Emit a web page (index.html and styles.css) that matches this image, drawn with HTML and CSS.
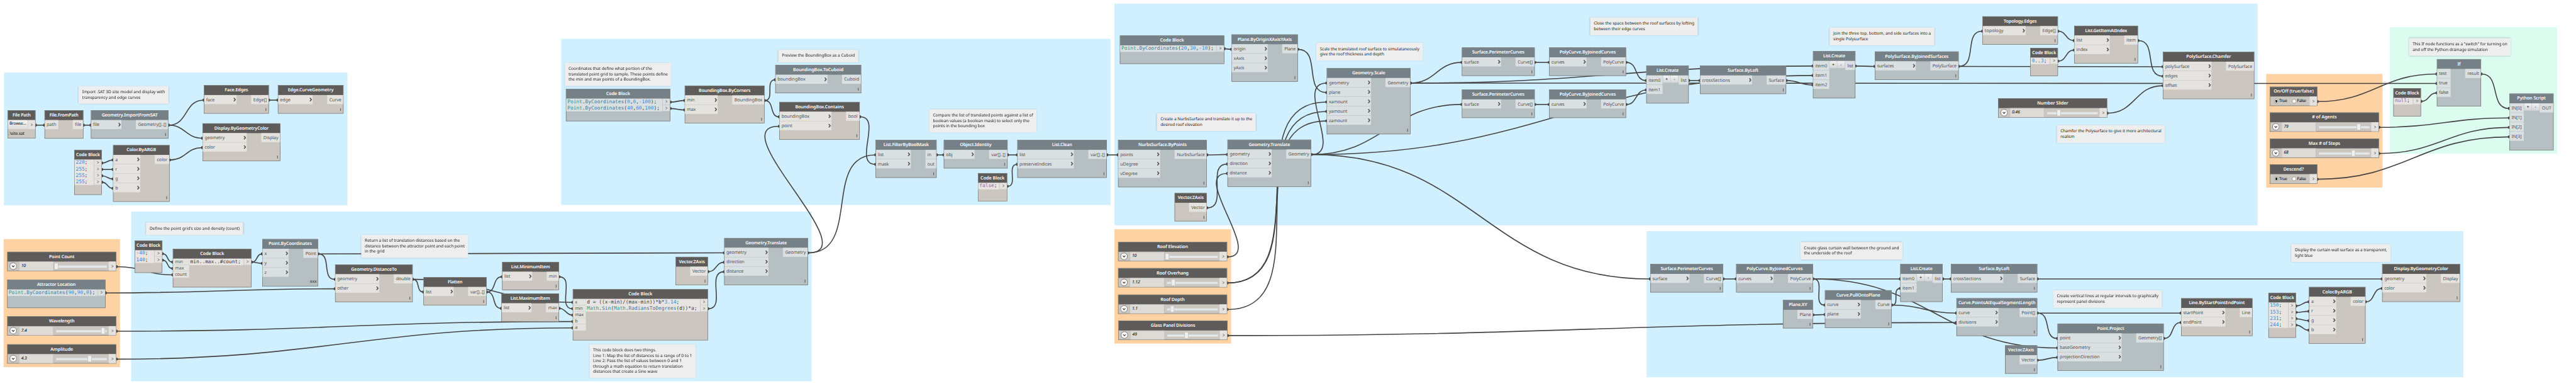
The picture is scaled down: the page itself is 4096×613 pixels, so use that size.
FILE: index.html
```html
<!DOCTYPE html>
<html lang="en">
<head>
<meta charset="utf-8">
<title>Node graph</title>
<link rel="stylesheet" href="styles.css">
</head>
<body>
<main class="viewport"><div class="canvas" id="canvas"></div></main>
<script src="graph.js"></script>
</body>
</html>
```
FILE: styles.css
```css
* { box-sizing: border-box; }
body { margin: 0; background: #fff; }
.viewport { width: 4096px; height: 613px; overflow: hidden; position: relative; }

/* Graph units are 7110 x 1064; the canvas is zoomed out to fit the viewport. */
.canvas {
  position: relative;
  width: 7110px;
  height: 1064px;
  transform: scale(.57609, .57613);
  transform-origin: 0 0;
  font-family: "Noto Sans", "Open Sans", sans-serif;
  font-size: 12.4px;
  letter-spacing: -.2px;
  color: #555352;
  white-space: nowrap;
  text-rendering: geometricPrecision;
}

.group { position: absolute; }
.group.blue { background: #d0efff; }
.group.orange { background: #ffd2a3; }
.group.green { background: #dbfcef; }

.wires { position: absolute; left: 0; top: 0; width: 7110px; height: 1064px; }
.wires path { fill: none; stroke: #444342; stroke-width: 2.8; }
.wires circle { fill: #444342; }

.note {
  position: absolute;
  margin: 0;
  padding: 10px 0 0 10px;
  background: #eee;
  box-shadow: 0 0 4px rgba(60, 90, 110, .4);
  color: #1c1c1c;
  font-size: 11.4px;
  line-height: 14.5px;
  white-space: pre;
}

.node {
  --head: #5e5c5a;
  --body: #cbc6bf;
  --port: #e4e3df;
  --code: #e8e4e1;
  --line: #c9c5bf;
  position: absolute;
  display: flex;
  flex-direction: column;
  border: 1px solid #5e5c5a;
  background: var(--body);
}
.node.slate {
  --head: #758087;
  --body: #b6bfc2;
  --port: #dae0e1;
  --code: #dae0e1;
  --line: #b6bfc2;
}
.title {
  flex: none;
  height: 26px;
  line-height: 24px;
  background: var(--head);
  color: #fff;
  font-size: 12.4px;
  font-weight: 600;
  text-align: center;
}
.row { display: flex; flex: 1; align-items: flex-start; }
.spacer { flex: 1; }
.ports { display: flex; flex-direction: column; gap: 1px; }
.ports.in { background: var(--line); }
.port {
  display: flex;
  align-items: center;
  justify-content: space-between;
  height: 25px;
  padding: 0 5px 1px;
  background: var(--port);
}
.ports.in .port { padding-right: 1px; }
.ports.out .port { justify-content: flex-start; padding: 0 0 1px 6px; }
.ports.tight { gap: 0; background: none; }
.ports.tight .port { height: 17.5px; padding-bottom: 1px; border-bottom: 1px solid var(--line); }
.chevron { width: 8px; height: 11px; fill: none; stroke: #514f4d; stroke-width: 2.6; }
.arrow { width: 7px; height: 8px; fill: none; stroke: #5c5a58; stroke-width: 1.2; }
.ports.out .port.go { justify-content: center; padding: 0; border-left: 1px solid #bcb8b4; }
.lacing {
  position: absolute;
  right: 6px;
  bottom: 6px;
  width: 1.7px;
  height: 8px;
  background: #636260;
}
.lacing.cross {
  right: 3px;
  bottom: 4px;
  width: auto;
  height: 14px;
  background: none;
  font-size: 11px;
  font-weight: 700;
  line-height: 14px;
}

.code {
  flex: 1;
  padding-left: 3px;
  background: var(--code);
  color: #3b3a39;
  font: 13.66px/17.5px "DejaVu Sans Mono", monospace;
  letter-spacing: 0;
}
.code div { height: 17.5px; }
.code .num { color: #2f8be4; }
.code .cls { color: #2f9a8c; }
.code .fn { color: #417a9c; }
.code .key { color: #8f62ae; }

.plus {
  width: 20.5px;
  height: 20px;
  margin-left: .8px;
  background: linear-gradient(#f2f2f3, #d3d5d8);
  color: #000;
  line-height: 19px;
  text-align: center;
}

.expand { width: 31px; height: 25px; display: flex; align-items: center; justify-content: center; }
.expand svg { width: 21px; height: 21px; }
.value {
  width: 96px;
  height: 25px;
  padding-left: 5.5px;
  border: 1px solid #abadb3;
  border-bottom: 0;
  background: #dedbd6;
  color: #000;
  font-size: 11.8px;
  font-style: italic;
  line-height: 20px;
}
.track { position: relative; flex: 1; height: 25px; }
.track::before {
  content: "";
  position: absolute;
  left: 7px;
  right: 5px;
  top: 11px;
  height: 4px;
  border: 1px solid #d6dadb;
  background: #e7eaea;
}
.thumb {
  position: absolute;
  top: 4px;
  width: 11px;
  height: 18px;
  border: 1px solid #acacac;
  background: #f0f0f0;
}
.outcol { width: 20px; height: 25px; background: var(--port); display: flex; align-items: center; justify-content: center; }

.radio { display: flex; align-items: center; gap: 2.4px; width: 49.3px; height: 25px; padding-left: 10.5px; color: #000; font-size: 11.4px; }
.radio i { flex: none; width: 12px; height: 12px; border: 1px solid #707070; border-radius: 50%; background: #fff; }
.radio i.on { background: radial-gradient(circle, #212121 0 3px, #fff 3.6px); }

.browse {
  width: 54px;
  height: 25px;
  padding-left: 4px;
  background: linear-gradient(#f3f3f3, #dcdcdc);
  color: #000;
  font-size: 11.4px;
  line-height: 20px;
}
.path-text { height: 25px; padding-left: 2px; color: #000; font-size: 11.4px; line-height: 24px; }
```
FILE: graph.js
```js
const groups = [
  ["blue", 11, 200, 959, 566], ["orange", 10, 659, 331, 1012],
  ["blue", 362, 583, 2240, 1051], ["blue", 1549, 107, 3065, 565],
  ["blue", 3076, 10, 6231, 621], ["orange", 3076, 632, 3398, 947],
  ["orange", 6255, 204, 6576, 517], ["green", 6596, 75, 7058, 424],
  ["blue", 4545, 637, 6799, 1040],
];

const notes = [
  [217, 237, 465, "Import .SAT 3D site model and display with\ntransparency and edge curves"],
  [403, 613, 671, "Define the point grid's size and density (count)"],
  [997, 647, 1292, "Return a list of translation distances based on the\ndistance between the attractor point and each point\nin the grid"],
  [1627, 949, 1920, "This code block does two things.\nLine 1: Map the list of distances to a range of 0 to 1\nLine 2: Pass the list of values between 0 and 1\nthrough a math equation to return translation\ndistances that create a Sine wave"],
  [1559, 173, 1853, "Coordinates that define what portion of the\ntranslated point grid to sample. These points define\nthe min and max points of a BoundingBox."],
  [2148, 137, 2369, "Preview the BoundingBox as a Cuboid"],
  [2565, 301, 2861, "Compare the list of translated points against a list of\nboolean values (a boolean mask) to select only the\npoints in the bounding box"],
  [3633, 118, 3927, "Scale the translated roof surface to simulataneously\ngive the roof thickness and depth"],
  [3193, 312, 3466, "Create a NurbsSurface and translate it up to the\ndesired roof elevation"],
  [4389, 48, 4686, "Close the space between the roof surfaces by lofting\nbetween their edge curves"],
  [5050, 76, 5339, "Join the three top, bottom, and side surfaces into a\nsingle Polysurface"],
  [5677, 345, 5975, "Chamfer the Polysurface to give it more architectural\nrealism"],
  [6649, 105, 6930, "This If node functions as a \"switch\" for turning on\nand off the Python drainage simulation"],
  [4969, 667, 5251, "Create glass curtain wall between the ground and\nthe underside of the roof"],
  [5667, 800, 5967, "Create vertical lines at regular intervals to graphically\nrepresent panel divisions"],
  [6324, 673, 6598, "Display the curtain wall surface as a transparent,\nlight blue"],
];

// Drawn width of each node title, in graph units
const titleWidths = {
  "File Path": 49.5, "File.FromPath": 79.8, "Geometry.ImportFromSAT": 154.7, "Face.Edges": 64.3,
  "Edge.CurveGeometry": 126, "Display.ByGeometryColor": 149.7, "Color.ByARGB": 81.7, "Code Block": 66.2,
  "Point Count": 70.2, "Attractor Location": 106.5, "Wavelength": 70.2, "Amplitude": 62.5,
  "Point.ByCoordinates": 119.3, "Geometry.DistanceTo": 126, "Flatten": 40, "List.MinimumItem": 107,
  "List.MaximumItem": 108.6, "Vector.ZAxis": 71.6, "Geometry.Translate": 114.3,
  "BoundingBox.ByCorners": 142.6, "BoundingBox.ToCuboid": 138.8, "BoundingBox.Contains": 134.4,
  "List.FilterByBoolMask": 125, "Object.Identity": 87.5, "List.Clean": 55.4,
  "Plane.ByOriginXAxisYAxis": 149.8, "Geometry.Scale": 91.3, "NurbsSurface.ByPoints": 133.2,
  "Roof Elevation": 84.8, "Roof Overhang": 88.4, "Roof Depth": 66.5, "Glass Panel Divisions": 122.3,
  "Surface.PerimeterCurves": 144.3, "PolyCurve.ByJoinedCurves": 155.4, "List.Create": 60.9,
  "Surface.ByLoft": 85, "PolySurface.ByJoinedSurfaces": 175.3, "Topology.Edges": 91,
  "List.GetItemAtIndex": 115.6, "PolySurface.Chamfer": 123.2, "Number Slider": 85.7, "If": 8.5,
  "Python Script": 79.2, "On/Off (true/false)": 110.2, "# of Agents": 68.3, "Max # of Steps": 87.2,
  "Descend?": 56.3, "Curve.PullOntoPlane": 121.9, "Plane.XY": 51,
  "Curve.PointsAtEqualSegmentLength": 212.6, "Point.Project": 75, "Line.ByStartPointEndPoint": 154,
};

// Function nodes: id, shade, left, top, right, title, inputs, input column end, outputs, output column start, flags
// Flags: n = no chevrons, b = add/remove buttons, q = no lacing mark, x = cross lacing
const functions = [
  ["from", "", 123, 304, 230, "File.FromPath", "path", 161, "file", 201, "nq"],
  ["sat", "slate", 251, 304, 465, "Geometry.ImportFromSAT", "file", 335, "Geometry[]..[]", 375],
  ["edges", "", 563, 235, 742, "Face.Edges", "face", 653, "Edge[]", 693],
  ["curve", "", 767, 235, 948, "Edge.CurveGeometry", "edge", 863, "Curve", 903],
  ["disp1", "", 559, 340, 774, "Display.ByGeometryColor", "geometry color", 681, "Display", 721],
  ["argb1", "", 312, 400, 468, "Color.ByARGB", "a r g b", 387, "color", 427],
  ["point", "slate", 724, 659, 878, "Point.ByCoordinates", "x y z", 797, "Point", 837, "x"],
  ["dist", "", 925, 729, 1139, "Geometry.DistanceTo", "geometry other", 1047, "double", 1087],
  ["flat", "", 1169, 764, 1343, "Flatten", "list", 1252, "var[]..[]", 1292],
  ["min", "", 1386, 722, 1543, "List.MinimumItem", "list", 1469, "min", 1509],
  ["max", "", 1384, 809, 1543, "List.MaximumItem", "list", 1467, "max", 1507],
  ["vz1", "", 1865, 708, 1954, "Vector.ZAxis", "", 0, "Vector", 1905],
  ["tr1", "slate", 1999, 656, 2230, "Geometry.Translate", "geometry direction distance", 2121, "Geometry", 2161],
  ["corners", "", 1890, 236, 2110, "BoundingBox.ByCorners", "min max", 1981, "BoundingBox", 2021],
  ["cuboid", "slate", 2140, 179, 2377, "BoundingBox.ToCuboid", "boundingBox", 2284, "Cuboid", 2324],
  ["contains", "", 2151, 281, 2373, "BoundingBox.Contains", "boundingBox point", 2295, "bool", 2335],
  ["mask", "slate", 2417, 386, 2585, "List.FilterByBoolMask", "list mask", 2514, "in out", 2554],
  ["ident", "slate", 2605, 386, 2781, "Object.Identity", "obj", 2690, "var[]..[]", 2730],
  ["clean", "slate", 2808, 386, 3055, "List.Clean", "list preserveIndices", 2964, "var[]..[]", 3004],
  ["plane", "slate", 3399, 95, 3582, "Plane.ByOriginXAxisYAxis", "origin xAxis yAxis", 3499, "Plane", 3539],
  ["scale", "slate", 3662, 188, 3893, "Geometry.Scale", "geometry plane xamount yamount zamount", 3784, "Geometry", 3824],
  ["nurbs", "slate", 3086, 386, 3331, "NurbsSurface.ByPoints", "points uDegree vDegree", 3202, "NurbsSurface", 3242],
  ["tr2", "slate", 3388, 385, 3619, "Geometry.Translate", "geometry direction distance", 3510, "Geometry", 3550],
  ["vz2", "", 3242, 532, 3331, "Vector.ZAxis", "", 0, "Vector", 3282],
  ["per1", "slate", 4035, 131, 4236, "Surface.PerimeterCurves", "surface", 4143, "Curve[]", 4183],
  ["per2", "slate", 4035, 247, 4236, "Surface.PerimeterCurves", "surface", 4143, "Curve[]", 4183],
  ["pc1", "slate", 4276, 131, 4488, "PolyCurve.ByJoinedCurves", "curves", 4379, "PolyCurve", 4419],
  ["pc2", "slate", 4276, 247, 4488, "PolyCurve.ByJoinedCurves", "curves", 4379, "PolyCurve", 4419],
  ["list1", "slate", 4544, 181, 4661, "List.Create", "item0 item1", 4589, "list", 4633, "nbq"],
  ["loft1", "slate", 4692, 181, 4930, "Surface.ByLoft", "crossSections", 4836, "Surface", 4876],
  ["list2", "slate", 5004, 141, 5121, "List.Create", "item0 item1 item2", 5049, "list", 5093, "nbq"],
  ["poly", "slate", 5175, 142, 5406, "PolySurface.ByJoinedSurfaces", "surfaces", 5288, "PolySurface", 5328],
  ["topo", "", 5472, 45, 5680, "Topology.Edges", "topology", 5591, "Edge[]", 5631],
  ["item", "", 5725, 71, 5901, "List.GetItemAtIndex", "list index", 5823, "item", 5863],
  ["chamfer", "", 5970, 143, 6222, "PolySurface.Chamfer", "polySurface edges offset", 6104, "PolySurface", 6144],
  ["if", "slate", 6726, 163, 6848, "If", "test true false", 6764, "result", 6804, "nq"],
  ["py", "slate", 6926, 258, 7048, "Python Script", "IN[0] IN[1] IN[2] IN[3]", 6966, "OUT", 7010, "nbq"],
  ["per3", "slate", 4555, 728, 4756, "Surface.PerimeterCurves", "surface", 4663, "Curve[]", 4703],
  ["pc3", "slate", 4792, 728, 5004, "PolyCurve.ByJoinedCurves", "curves", 4895, "PolyCurve", 4935],
  ["pull", "slate", 5037, 800, 5221, "Curve.PullOntoPlane", "curve plane", 5136, "Curve", 5176],
  ["xy", "slate", 4921, 827, 5004, "Plane.XY", "", 0, "Plane", 4961],
  ["list3", "slate", 5245, 728, 5362, "List.Create", "item0 item1", 5290, "list", 5334, "nbq"],
  ["loft2", "slate", 5385, 728, 5623, "Surface.ByLoft", "crossSections", 5529, "Surface", 5569],
  ["seg", "slate", 5400, 822, 5623, "Curve.PointsAtEqualSegmentLength", "curve divisions", 5516, "Point[]", 5574],
  ["vz3", "slate", 5534, 952, 5623, "Vector.ZAxis", "", 0, "Vector", 5574],
  ["proj", "slate", 5679, 892, 5972, "Point.Project", "point baseGeometry projectionDirection", 5856, "Geometry[]", 5896],
  ["line", "", 6020, 822, 6217, "Line.ByStartPointEndPoint", "startPoint endPoint", 6142, "Line", 6182],
  ["argb2", "", 6373, 791, 6529, "Color.ByARGB", "a r g b", 6448, "color", 6488],
  ["disp2", "", 6575, 728, 6790, "Display.ByGeometryColor", "geometry color", 6697, "Display", 6737],
];

// Code blocks: id, shade, left, top, right, title, lines, output column start, inputs, input column end
const blocks = [
  ["cb1", "", 205, 413, 281, "Code Block", ["220;", "255;", "255;", "255;"], 259],
  ["attr", "slate", 20, 771, 291, "Attractor Location", ["Point.ByCoordinates(90,90,0);"], 269],
  ["cb2", "", 372, 663, 448, "Code Block", ["-40;", "140;"], 426],
  ["cb3", "", 477, 686, 694, "Code Block", ["min..max..#count;"], 672, "min max count", 522],
  ["cb4", "", 1581, 797, 1954, "Code Block", ["d = ((x-min)/(max-min))*b*3.14;", "Math.Sin(Math.RadiansToDegrees(d))*a;"], 1932, "x min max b a", 1617],
  ["cb5", "slate", 1562, 245, 1850, "Code Block", ["Point.ByCoordinates(0,0,-100);", "Point.ByCoordinates(40,60,100);"], 1828],
  ["cb6", "", 2699, 477, 2780, "Code Block", ["false;"], 2758],
  ["cb7", "slate", 3091, 98, 3379, "Code Block", ["Point.ByCoordinates(20,30,-10);"], 3357],
  ["cb8", "", 5604, 132, 5680, "Code Block", ["0..3;"], 5658],
  ["cb9", "", 6606, 243, 6682, "Code Block", ["null;"], 6660],
  ["cb10", "", 6261, 807, 6337, "Code Block", ["150;", "153;", "231;", "244;"], 6315],
];

// Sliders: id, left, top, title, value, thumb offset
const sliders = [
  ["count", 20, 694, "Point Count", "10", 130],
  ["wave", 20, 872, "Wavelength", "7.4", 259],
  ["amp", 20, 949, "Amplitude", "4.3", 222],
  ["elev", 3086, 667, "Roof Elevation", "10", 130],
  ["over", 3086, 739, "Roof Overhang", "1.12", 147],
  ["depth", 3086, 812, "Roof Depth", "1.1", 144],
  ["glass", 3087, 884, "Glass Panel Divisions", "49", 182],
  ["num", 5515, 271, "Number Slider", "0.46", 162],
  ["agents", 6265, 310, "# of Agents", "79", 240],
  ["steps", 6265, 382, "Max # of Steps", "68", 225],
];

const toggles = [
  ["onoff", 6265, 239, "On/Off (true/false)"],
  ["desc", 6265, 453, "Descend?"],
];

// Wires: source node and output index, target node and input index
const wires = `file.0 from.0|from.0 sat.0|sat.0 edges.0|sat.0 disp1.0|edges.0 curve.0|argb1.0 disp1.1
cb1.0 argb1.0|cb1.1 argb1.1|cb1.2 argb1.2|cb1.3 argb1.3
count.0 cb3.2|cb2.0 cb3.0|cb2.1 cb3.1|cb3.0 point.0|cb3.0 point.1|point.0 dist.0|point.0 tr1.0|attr.0 dist.1
dist.0 flat.0|dist.0 cb4.0|flat.0 min.0|flat.0 max.0|min.0 cb4.1|max.0 cb4.2|wave.0 cb4.3|amp.0 cb4.4
cb4.1 tr1.2|vz1.0 tr1.1|tr1.0 contains.1|tr1.0 mask.0|contains.0 mask.1|cb5.0 corners.0|cb5.1 corners.1
corners.0 cuboid.0|corners.0 contains.0|mask.0 ident.0|ident.0 clean.0|cb6.0 clean.1|clean.0 nurbs.0
cb7.0 plane.0|plane.0 scale.1|nurbs.0 tr2.0|vz2.0 tr2.1|elev.0 tr2.2|over.0 scale.2|over.0 scale.3|depth.0 scale.4
tr2.0 scale.0|tr2.0 per2.0|tr2.0 list2.1|tr2.0 per3.0|scale.0 per1.0|scale.0 list2.0|scale.0 if.1
per1.0 pc1.0|per2.0 pc2.0|pc1.0 list1.0|pc2.0 list1.1|list1.0 loft1.0|loft1.0 list2.2|list2.0 poly.0
poly.0 topo.0|poly.0 chamfer.0|topo.0 item.0|cb8.0 item.1|item.0 chamfer.1|num.0 chamfer.2
onoff.0 if.0|cb9.0 if.2|if.0 py.0|agents.0 py.1|steps.0 py.2|desc.0 py.3
glass.0 seg.1|per3.0 pc3.0|pc3.0 list3.0|pc3.0 pull.0|pc3.0 proj.1|xy.0 pull.1|pull.0 list3.1|pull.0 seg.0
list3.0 loft2.0|loft2.0 disp2.0|seg.0 line.0|seg.0 proj.0|vz3.0 proj.2|proj.0 line.1
cb10.0 argb2.0|cb10.1 argb2.1|cb10.2 argb2.2|cb10.3 argb2.3|argb2.0 disp2.1`.split(/[|\n]/);

const chevron = '<svg class="chevron" viewBox="0 0 8 11"><path d="M1.5 .8 5.5 5.5 1.5 10.2"/></svg>';
const arrow = '<svg class="arrow" viewBox="0 0 7 8"><path d="M.8 1 6 4 .8 7"/></svg>';
const expand = '<svg viewBox="0 0 21 21"><circle cx="10.5" cy="10.5" r="9.2" fill="#fff" stroke="#555" stroke-width="1.2"/><path d="M7 8.8l3.5 3.8L14 8.8" fill="none" stroke="#333" stroke-width="2"/></svg>';

const ends = {};
const html = [];
const anchor = (id, left, right, y, inStep, outStep) => { ends[id] = { left, right, y, inStep, outStep }; };
const box = (cls, x, y, w, h, inner) =>
  `<section class="node ${cls}" style="left:${x}px;top:${y}px;width:${w}px;height:${h}px">${inner}</section>`;
const fitted = (text, width) => `<span data-fit="${width}">${text}</span>`;
const title = t => `<header class="title">${fitted(t, titleWidths[t])}</header>`;
const columnFit = width => `data-column="${Math.max(width, 6)}"`;

function highlight(line) {
  return line
    .replace(/(^|[(,*. ])(-?\d+(?:\.\d+)?)/g, '$1<b0>$2</b0>')
    .replace(/\b(Point|Math)\.(\w+)/g, '<b1>$1</b1>.<b2>$2</b2>')
    .replace(/^(false|null)/, '<b3>$1</b3>')
    .replace(/<b(\d)>/g, (m, i) => `<span class="${["num", "cls", "fn", "key"][i]}">`)
    .replace(/<\/b\d>/g, '</span>');
}

for (const [cls, x, y, r, b] of groups)
  html.push(`<div class="group ${cls}" style="left:${x}px;top:${y}px;width:${r - x}px;height:${b - y}px"></div>`);

const nodes = [];
for (const [id, shade, x, y, r, name, insText, inEnd, outsText, outStart, flags = ""] of functions) {
  const ins = insText ? insText.split(" ") : [];
  const outs = outsText.split(" ");
  const rows = Math.max(ins.length, 1);
  const plain = flags.includes("n");
  const left = ins.length
    ? `<div class="ports in" ${columnFit(inEnd - x - (plain ? 12 : 67))} style="width:${inEnd - x - 1}px">${ins.map(p => `<div class="port"><span>${p}</span>${plain ? "" : chevron}</div>`).join("")}</div>` : "";
  const mid = flags.includes("b") ? '<span class="plus">+</span><span class="plus">-</span>' : "";
  const right = `<div class="ports out" ${columnFit(r - outStart - 11.8)} style="width:${r - outStart - 1}px">${outs.map(p => `<div class="port"><span>${p}</span></div>`).join("")}</div>`;
  const lacing = flags.includes("q") ? "" : flags.includes("x") ? '<span class="lacing cross">xxx</span>' : '<span class="lacing"></span>';
  nodes.push(box(shade, x, y, r - x, 52 + 26 * rows, `${title(name)}<div class="row">${left}${mid}<div class="spacer"></div>${right}</div>${lacing}`));
  anchor(id, x, r, y + 41, 26.1, 26.1);
}

for (const [id, shade, x, y, r, name, lines, outStart, insText = "", inEnd] of blocks) {
  const ins = insText ? insText.split(" ") : [];
  const rows = Math.max(ins.length, lines.length);
  const h = Math.max(78, Math.round(53.5 + 17.5 * rows));
  const left = ins.length
    ? `<div class="ports in tight" ${columnFit(inEnd - x - 12.5)} style="width:${inEnd - x - 1}px">${ins.map(p => `<div class="port"><span>${p}</span></div>`).join("")}</div>` : "";
  const right = `<div class="ports out tight" style="width:${r - outStart - 1}px">${lines.map(() => `<div class="port go">${arrow}</div>`).join("")}</div>`;
  const code = `<div class="code">${lines.map(l => `<div>${highlight(l)}</div>`).join("")}</div>`;
  nodes.push(box(shade, x, y, r - x, h, `${title(name)}<div class="row">${left}${code}${right}</div>`));
  anchor(id, x, r, y + 36.5, 17.6, 17.6);
}

for (const [id, x, y, name, value, thumb] of sliders) {
  nodes.push(box("slider", x, y, 301, 53,
    `${title(name)}<div class="row"><span class="expand">${expand}</span><span class="value">${value}</span>
     <div class="track"><span class="thumb" style="left:${thumb - 128}px"></span></div><span class="outcol">${arrow}</span></div>`));
  anchor(id, x, x + 301, y + 41, 0, 0);
}

for (const [id, x, y, name] of toggles) {
  nodes.push(box("bool", x, y, 131, 53,
    `${title(name)}<div class="row"><span class="radio"><i class="on"></i>${fitted("True", 21.8)}</span><span class="radio"><i></i>${fitted("False", 24.8)}</span>
     <div class="spacer"></div><span class="outcol">${arrow}</span></div>`));
  anchor(id, x, x + 131, y + 41, 0, 0);
}

nodes.push(box("path", 21, 304, 77, 77,
  `${title("File Path")}<div class="row"><span class="browse">${fitted("Browse...", 45.8)}</span><div class="spacer"></div><span class="outcol">${arrow}</span></div><div class="path-text">${fitted(".\\site.sat", 43.3)}</div>`));
anchor("file", 21, 98, 345, 0, 0);

const dots = new Set();
const paths = wires.map(wire => {
  const [[a, i], [b, j]] = wire.split(" ").map(s => s.split("."));
  const x1 = ends[a].right + 1, y1 = ends[a].y + i * ends[a].outStep;
  const x2 = ends[b].left - 1, y2 = ends[b].y + j * ends[b].inStep;
  const reach = .45 * Math.hypot(x2 - x1, y2 - y1);
  dots.add(`<circle cx="${x1 - 1}" cy="${y1}" r="4.2"/>`).add(`<circle cx="${x2 + 1}" cy="${y2}" r="4.2"/>`);
  return `<path d="M${x1} ${y1}C${x1 + reach} ${y1} ${x2 - reach} ${y2} ${x2} ${y2}"/>`;
});
html.push(`<svg class="wires" viewBox="0 0 7110 1064">${paths.join("")}${[...dots].join("")}</svg>`);
html.push(...nodes);

for (const [x, y, r, text] of notes) {
  const h = Math.round(20 + 14.6 * text.split("\n").length);
  html.push(`<p class="note" style="left:${x}px;top:${y}px;width:${r - x}px;height:${h}px"><span data-fit="${r - x - 19.5}">${text}</span></p>`);
}

const canvas = document.getElementById("canvas");
canvas.innerHTML = html.join("");

// Track text so that it spans its intended width: the spacing is shared by a whole label column or note.
const zoom = canvas.getBoundingClientRect().width / 7110;
const widthOf = el => el.getBoundingClientRect().width / zoom;
function spacing(el, target) {
  const longest = Math.max(...el.textContent.split("\n").map(l => l.length));
  return Math.min(.5, Math.max(-.9, (target - widthOf(el)) / longest));
}
canvas.querySelectorAll("[data-fit], [data-column]").forEach(el => { el.style.letterSpacing = "0px"; });
const jobs = [];
canvas.querySelectorAll("[data-fit]").forEach(el => jobs.push([el, spacing(el, +el.dataset.fit)]));
canvas.querySelectorAll("[data-column]").forEach(col => {
  const widest = [...col.querySelectorAll("span")].reduce((a, b) => widthOf(a) >= widthOf(b) ? a : b);
  jobs.push([col, widest.textContent.length < 3 ? -.1 : spacing(widest, +col.dataset.column)]);
});
jobs.forEach(([el, space]) => { el.style.letterSpacing = `${space.toFixed(3)}px`; });
```
